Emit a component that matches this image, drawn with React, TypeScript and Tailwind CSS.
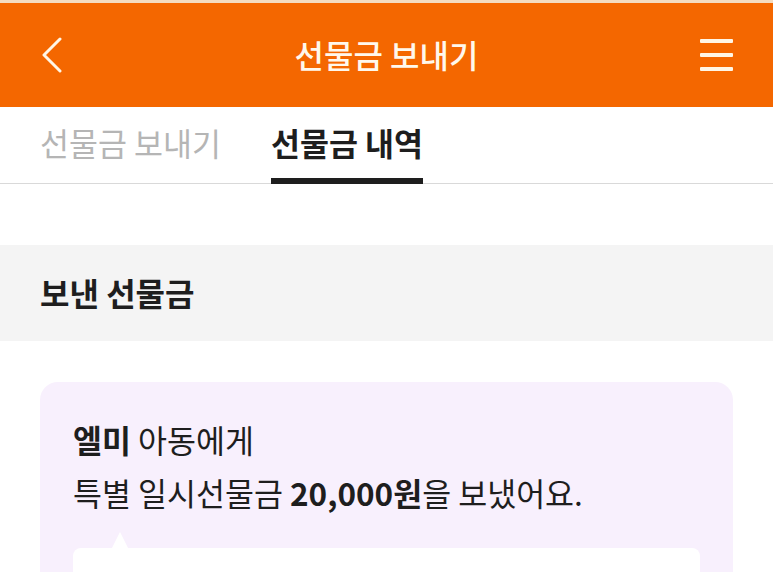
import React from "react";

const font = { fontFamily: '"Noto Sans CJK KR", "Noto Sans", sans-serif' };

export default function App() {
  return (
    <div className="w-[773px] h-[572px] overflow-hidden bg-white" style={font}>
      <div className="h-[3px] bg-[#f4dcc0]" />
      <header className="h-[104px] bg-[#f46700] grid grid-cols-[1fr_auto_1fr] items-center px-[40px]">
        <svg width="22" height="36" viewBox="0 0 22 36" className="ml-[1px]">
          <path d="M19 2 L3 18 L19 34" fill="none" stroke="#fff6e6" strokeWidth="3" strokeLinecap="round" strokeLinejoin="round" />
        </svg>
        <h1 className="text-[32px] font-medium text-[#fff8ec] leading-none pb-[2px]">선물금 보내기</h1>
        <div className="flex flex-col gap-[10px] w-[33px] justify-self-end">
          <div className="h-[4px] bg-[#fff6e6] rounded-[1px]" />
          <div className="h-[4px] bg-[#fff6e6] rounded-[1px]" />
          <div className="h-[4px] bg-[#fff6e6] rounded-[1px]" />
        </div>
      </header>
      <nav className="h-[77px] flex items-stretch gap-[50px] px-[40px] border-b border-[#d9d9d9]">
        <div className="flex items-center text-[31.5px] text-[#b5b5b5] pb-[5px]">선물금 보내기</div>
        <div className="relative flex items-center text-[31.5px] font-bold text-[#1e1e1e] pb-[5px]">
          선물금 내역
          <div className="absolute left-0 right-0 bottom-[-1px] h-[6px] bg-[#1e1e1e]" />
        </div>
      </nav>
      <div className="h-[61px]" />
      <section className="h-[96px] bg-[#f4f4f4] flex items-center px-[40px]">
        <h2 className="text-[32px] font-bold text-[#1e1e1e] pb-[2px]">보낸 선물금</h2>
      </section>
      <div className="px-[40px] pt-[41px]">
        <div className="bg-[#f8f0fd] rounded-[18px] pt-[31px] px-[33px] pb-[40px]">
          <p className="text-[31.5px] leading-[53px] text-[#1e1e1e]">
            <span className="font-bold">엘미</span> 아동에게
          </p>
          <p className="text-[31.5px] leading-[53px] text-[#1e1e1e]">
            특별 일시선물금 <span className="font-bold">20,000원</span>을 보냈어요.
          </p>
          <div className="relative mt-[29px] h-[80px] bg-white rounded-[8px]">
            <div className="absolute left-[39px] top-[-16px] w-0 h-0 border-l-[8px] border-r-[8px] border-b-[16px] border-l-transparent border-r-transparent border-b-white" />
          </div>
        </div>
      </div>
    </div>
  );
}
